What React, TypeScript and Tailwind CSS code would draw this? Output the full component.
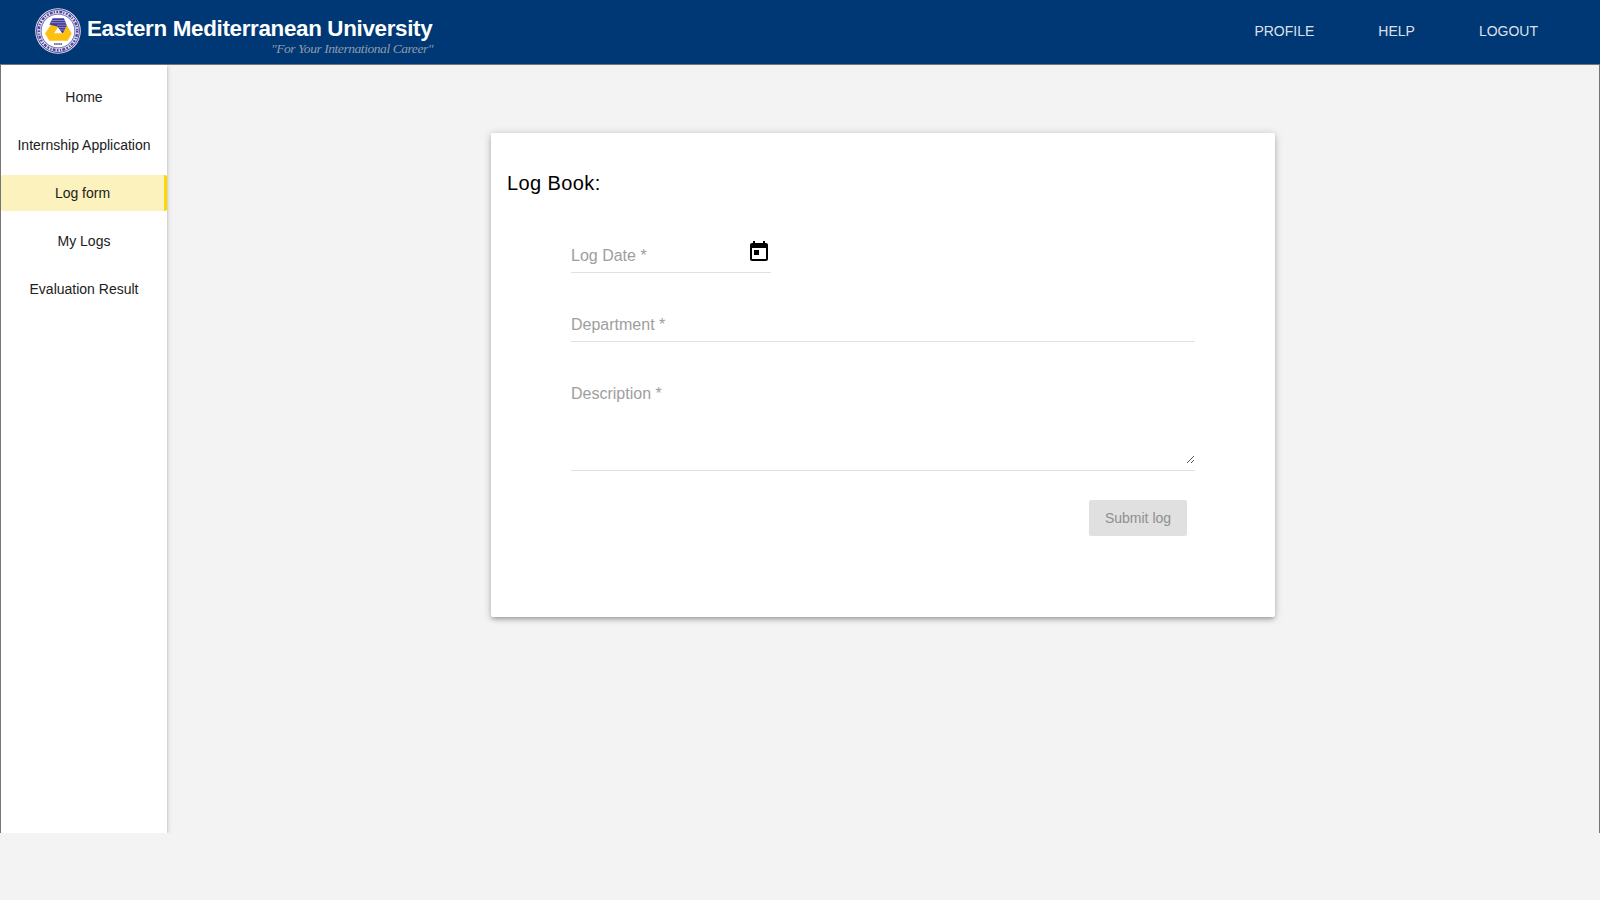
const sideItems = ["Home", "Internship Application", "Log form", "My Logs", "Evaluation Result"];

function Crest() {
  return (
    <svg className="block h-[46px] w-[46px] shrink-0" viewBox="0 0 46 46">
      <circle cx="23" cy="23" r="22.8" fill="#e4e2f1" />
      <circle cx="23" cy="23" r="21.4" fill="none" stroke="#4b479f" strokeWidth="1" />
      <circle cx="23" cy="23" r="19.2" fill="none" stroke="#4d49a1" strokeWidth="2.4" strokeDasharray="1.8 1.3 2.9 1.1 1.2 1.5" />
      <circle cx="23" cy="23" r="16.9" fill="#fff" stroke="#4b479f" strokeWidth="0.8" />
      <path d="M15.700 17L10 25.600L14.300 32.800H32.700L36.700 25.400L31.700 17z" fill="#fdc010" />
      <path d="M23.300 19L19 25.200H27.600z" fill="#fff" />
      <path d="M17.700 10.300H29L31.800 17.500L28 25H27L22.500 18.500L14.300 16.500z" fill="#3f3b99" />
      <path d="M16.500 12.500h13.500M15.300 14.700h15.800M22 17.200h10M23.500 19.600h7.500M25 22h5" stroke="#aaa7d4" strokeWidth="0.7" />
      <path d="M19.200 36h7.800" stroke="#5d599f" strokeWidth="1.900" strokeDasharray="1.400 0.700" />
    </svg>
  );
}

function Header() {
  return (
    <header className="flex h-16 justify-between bg-[#003876]">
      <div className="flex pl-[35px] pt-2">
        <Crest />
        <div className="ml-[6px] w-[346px] pt-2 whitespace-nowrap">
          <div className="text-[22.400px] leading-[26px] font-bold tracking-[-0.330px] text-white">Eastern Mediterranean University</div>
          <div className="-mt-[1px] text-right font-['Liberation_Serif',serif] text-[13.500px] leading-4 tracking-[-0.440px] text-[#8f9bab] italic">
            "For Your International Career"
          </div>
        </div>
      </div>
      <nav className="flex gap-16 pt-[13px] pr-[62px] text-sm leading-9 text-white/[.87]">
        <a>PROFILE</a>
        <a>HELP</a>
        <a>LOGOUT</a>
      </nav>
    </header>
  );
}

function Sidebar() {
  return (
    <aside className="z-10 flex w-[166px] shrink-0 flex-col gap-3 bg-white pt-[14px] shadow-[0_1px_5px_0_rgba(0,0,0,0.2),0_2px_2px_0_rgba(0,0,0,0.14),0_3px_1px_-2px_rgba(0,0,0,0.12)]">
      {sideItems.map((item) => (
        <a
          key={item}
          className={
            item === "Log form"
              ? "block h-9 rounded-[2px] border-r-[3px] border-[#ffd600] bg-[#fcf2be] text-center text-sm leading-9 text-[#212121]"
              : "block h-9 text-center text-sm leading-9 whitespace-nowrap text-[#212121]"
          }
        >
          {item}
        </a>
      ))}
    </aside>
  );
}

function LogCard() {
  return (
    <section className="mt-[68px] h-[484px] w-[784px] rounded-[2px] bg-white shadow-[0_1px_8px_0_rgba(0,0,0,0.2),0_3px_4px_0_rgba(0,0,0,0.14),0_3px_3px_-2px_rgba(0,0,0,0.12)]">
      <h1 className="px-4 pt-[38px] text-xl leading-6 tracking-[0.4px] text-black">Log Book:</h1>
      <form className="px-20 text-base leading-5 text-[#9e9e9e]">
        <div className="mt-[45px] flex h-[33px] w-[200px] justify-between border-b border-[#e0e0e0]">
          <label className="pt-[6px]">Log Date *</label>
          <svg className="h-6 w-6" viewBox="0 0 24 24" fill="#000">
            <path d="M19 3h-1V1h-2v2H8V1H6v2H5c-1.110 0-1.990.9-1.990 2L3 19c0 1.100.890 2 2 2h14c1.100 0 2-.9 2-2V5c0-1.100-.9-2-2-2zm0 16H5V8h14v11zM7 10h5v5H7z" />
          </svg>
        </div>
        <div className="mt-9 h-[33px] border-b border-[#e0e0e0] pt-[6px]">Department *</div>
        <div className="mt-9 flex h-[93px] items-end justify-between border-b border-[#e0e0e0]">
          <label className="self-start pt-[6px]">Description *</label>
          <svg className="mb-[6px] h-[9px] w-[9px]" viewBox="0 0 9 9">
            <path d="M1 8L8 1M5 8L8 5" stroke="#444" strokeWidth="0.9" />
          </svg>
        </div>
        <div className="mt-[29px] flex justify-end pr-2">
          <button type="button" disabled className="h-9 w-[98px] rounded-[2px] bg-[#e0e0e0] text-sm text-[#8f8f8f]">
            Submit log
          </button>
        </div>
      </form>
    </section>
  );
}

export default function App() {
  return (
    <div className="h-[900px] w-full overflow-hidden bg-[#f3f3f3] font-['Liberation_Sans',Arial,sans-serif]">
      <Header />
      <div className="flex h-[769px] overflow-hidden border-x border-t border-[#757575]">
        <Sidebar />
        <main className="flex flex-1 justify-center">
          <LogCard />
        </main>
      </div>
    </div>
  );
}
